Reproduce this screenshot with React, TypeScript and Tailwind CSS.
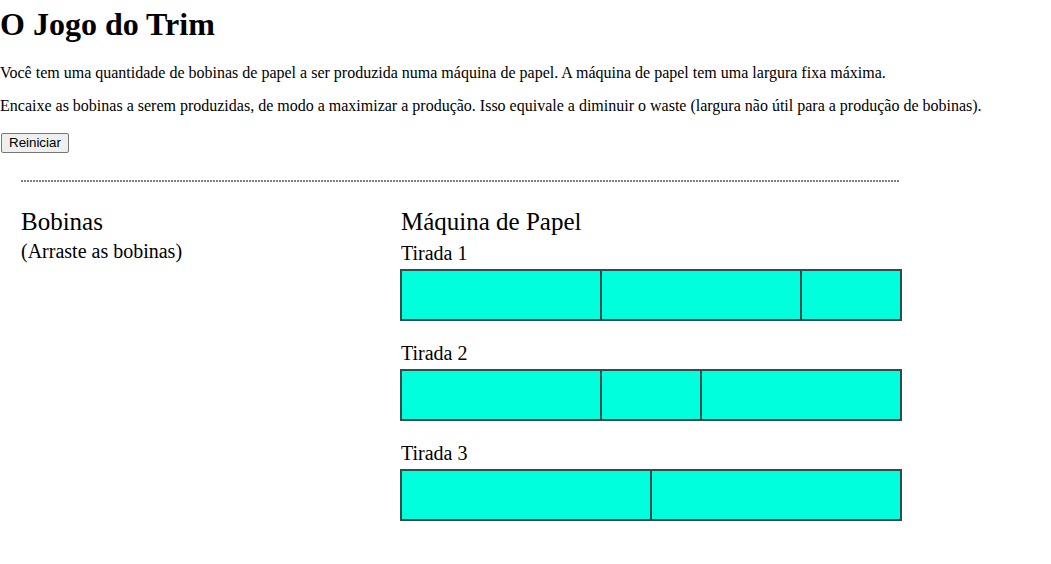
const tiradas = [
  { nome: 'Tirada 1', bobinas: [200, 200, 100] },
  { nome: 'Tirada 2', bobinas: [200, 100, 200] },
  { nome: 'Tirada 3', bobinas: [250, 250] },
];

export default function App() {
  return (
    <div className="min-h-screen bg-white font-['Liberation_Serif',serif] text-black">
      <h1 className="mt-[6px] text-[32px] font-bold leading-[37px]">O Jogo do Trim</h1>
      <p className="mt-[21px] text-[16px] leading-[18.4px]">
        Você tem uma quantidade de bobinas de papel a ser produzida numa máquina de papel. A máquina de papel tem uma largura fixa máxima.
      </p>
      <p className="mt-[15px] text-[16px] leading-[18.4px]">
        Encaixe as bobinas a serem produzidas, de modo a maximizar a produção. Isso equivale a diminuir o waste (largura não útil para a produção de bobinas).
      </p>
      <button className="ml-[1px] mt-[17px] block rounded-[2px] border border-[#767676] bg-[#efefef] px-[7px] py-[1px] font-['Liberation_Sans',sans-serif] text-[13.33px] leading-[16px] text-black">
        Reiniciar
      </button>
      <div className="ml-[21px] mt-[27px] h-[2px] w-[878px] bg-[repeating-linear-gradient(90deg,#808080_0_2px,transparent_2px_3px)]" />
      <div className="mt-[26px] flex">
        <div className="ml-[21px] w-[379px]">
          <h2 className="text-[25px] leading-[28.7px]">Bobinas</h2>
          <p className="mt-[3px] text-[20px] leading-[23px]">(Arraste as bobinas)</p>
        </div>
        <div className="w-[502px]">
          <h2 className="pl-[1px] text-[25px] leading-[28.7px]">Máquina de Papel</h2>
          {tiradas.map((t, i) => (
            <div key={t.nome} className={i === 0 ? 'mt-[5px]' : 'mt-[21px]'}>
              <div className="pl-[1px] text-[20px] leading-[23px]">{t.nome}</div>
              <div className="mt-[4px] flex h-[52px] border border-[#2f4f4f]">
                {t.bobinas.map((w, j) => (
                  <div
                    key={j}
                    className="h-full border border-[#2f4f4f] bg-[#00ffdd]"
                    style={{ width: w }}
                  />
                ))}
              </div>
            </div>
          ))}
        </div>
      </div>
    </div>
  );
}
